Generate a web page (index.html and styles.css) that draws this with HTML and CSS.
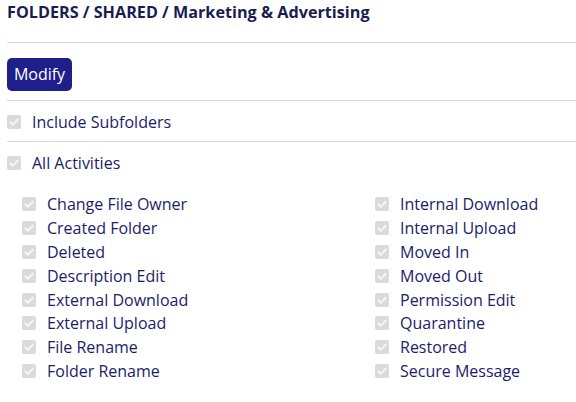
FILE: index.html
```html
<!DOCTYPE html>
<html>
<head>
<meta charset="utf-8">
<link rel="stylesheet" href="styles.css">
</head>
<body>
<div class="page">
  <h1 class="title">FOLDERS / SHARED / Marketing &amp; Advertising</h1>
  <hr class="rule">
  <div class="actions"><button class="btn">Modify</button></div>
  <hr class="rule tight">
  <label class="row"><span class="cb"><svg viewBox="0 0 14 14"><path d="M3.4 7.2 L6 9.7 L10.7 4.6"/></svg></span><span>Include Subfolders</span></label>
  <hr class="rule tight">
  <label class="row"><span class="cb"><svg viewBox="0 0 14 14"><path d="M3.4 7.2 L6 9.7 L10.7 4.6"/></svg></span><span>All Activities</span></label>
  <div class="grid">
    <div class="col">
      <label class="item"><span class="cb"><svg viewBox="0 0 14 14"><path d="M3.4 7.2 L6 9.7 L10.7 4.6"/></svg></span><span>Change File Owner</span></label>
      <label class="item"><span class="cb"><svg viewBox="0 0 14 14"><path d="M3.4 7.2 L6 9.7 L10.7 4.6"/></svg></span><span>Created Folder</span></label>
      <label class="item"><span class="cb"><svg viewBox="0 0 14 14"><path d="M3.4 7.2 L6 9.7 L10.7 4.6"/></svg></span><span>Deleted</span></label>
      <label class="item"><span class="cb"><svg viewBox="0 0 14 14"><path d="M3.4 7.2 L6 9.7 L10.7 4.6"/></svg></span><span>Description Edit</span></label>
      <label class="item"><span class="cb"><svg viewBox="0 0 14 14"><path d="M3.4 7.2 L6 9.7 L10.7 4.6"/></svg></span><span>External Download</span></label>
      <label class="item"><span class="cb"><svg viewBox="0 0 14 14"><path d="M3.4 7.2 L6 9.7 L10.7 4.6"/></svg></span><span>External Upload</span></label>
      <label class="item"><span class="cb"><svg viewBox="0 0 14 14"><path d="M3.4 7.2 L6 9.7 L10.7 4.6"/></svg></span><span>File Rename</span></label>
      <label class="item"><span class="cb"><svg viewBox="0 0 14 14"><path d="M3.4 7.2 L6 9.7 L10.7 4.6"/></svg></span><span>Folder Rename</span></label>
    </div>
    <div class="col">
      <label class="item"><span class="cb"><svg viewBox="0 0 14 14"><path d="M3.4 7.2 L6 9.7 L10.7 4.6"/></svg></span><span>Internal Download</span></label>
      <label class="item"><span class="cb"><svg viewBox="0 0 14 14"><path d="M3.4 7.2 L6 9.7 L10.7 4.6"/></svg></span><span>Internal Upload</span></label>
      <label class="item"><span class="cb"><svg viewBox="0 0 14 14"><path d="M3.4 7.2 L6 9.7 L10.7 4.6"/></svg></span><span>Moved In</span></label>
      <label class="item"><span class="cb"><svg viewBox="0 0 14 14"><path d="M3.4 7.2 L6 9.7 L10.7 4.6"/></svg></span><span>Moved Out</span></label>
      <label class="item"><span class="cb"><svg viewBox="0 0 14 14"><path d="M3.4 7.2 L6 9.7 L10.7 4.6"/></svg></span><span>Permission Edit</span></label>
      <label class="item"><span class="cb"><svg viewBox="0 0 14 14"><path d="M3.4 7.2 L6 9.7 L10.7 4.6"/></svg></span><span>Quarantine</span></label>
      <label class="item"><span class="cb"><svg viewBox="0 0 14 14"><path d="M3.4 7.2 L6 9.7 L10.7 4.6"/></svg></span><span>Restored</span></label>
      <label class="item"><span class="cb"><svg viewBox="0 0 14 14"><path d="M3.4 7.2 L6 9.7 L10.7 4.6"/></svg></span><span>Secure Message</span></label>
    </div>
  </div>
</div>
</body>
</html>
```
FILE: styles.css
```css
html, body {
  margin: 0;
  padding: 0;
  background: #ffffff;
}
body {
  font-family: "Open Sans", "Liberation Sans", sans-serif;
  color: #1a1d6a;
  overflow: hidden;
  height: 402px;
}
.page {
  padding: 1px 0 0 7px;
}
.title {
  margin: 0;
  font-size: 16.2px;
  font-weight: 700;
  line-height: 22px;
  color: #1a1d4f;
}
.rule {
  border: 0;
  border-top: 1px solid #c7d7f2;
  margin: 19px 0 0 0;
  height: 0;
}
.rule.tight {
  margin-top: 0;
}
.actions {
  padding: 15px 0 9px 0;
}
.btn {
  display: block;
  background: #1f1f8c;
  color: #ffffff;
  border: 0;
  border-radius: 5px;
  font-family: "Open Sans", "Liberation Sans", sans-serif;
  font-size: 16px;
  height: 33px;
  width: 65px;
  padding: 0;
  line-height: 33px;
}
.row {
  display: flex;
  align-items: center;
  height: 22px;
  padding: 10px 0 8px 0;
  font-size: 16px;
}
.cb {
  flex: none;
  width: 14px;
  height: 14px;
  border-radius: 2px;
  background: #dadada;
  margin-right: 11px;
  display: block;
}
.cb svg {
  display: block;
  width: 14px;
  height: 14px;
}
.cb path {
  fill: none;
  stroke: #f6f6f6;
  stroke-width: 2;
  stroke-linecap: round;
  stroke-linejoin: round;
}
.grid {
  display: grid;
  grid-template-columns: 353px 353px;
  padding: 10px 0 0 15px;
}
.item {
  display: flex;
  align-items: center;
  height: 23.9px;
  font-size: 16px;
}
```
